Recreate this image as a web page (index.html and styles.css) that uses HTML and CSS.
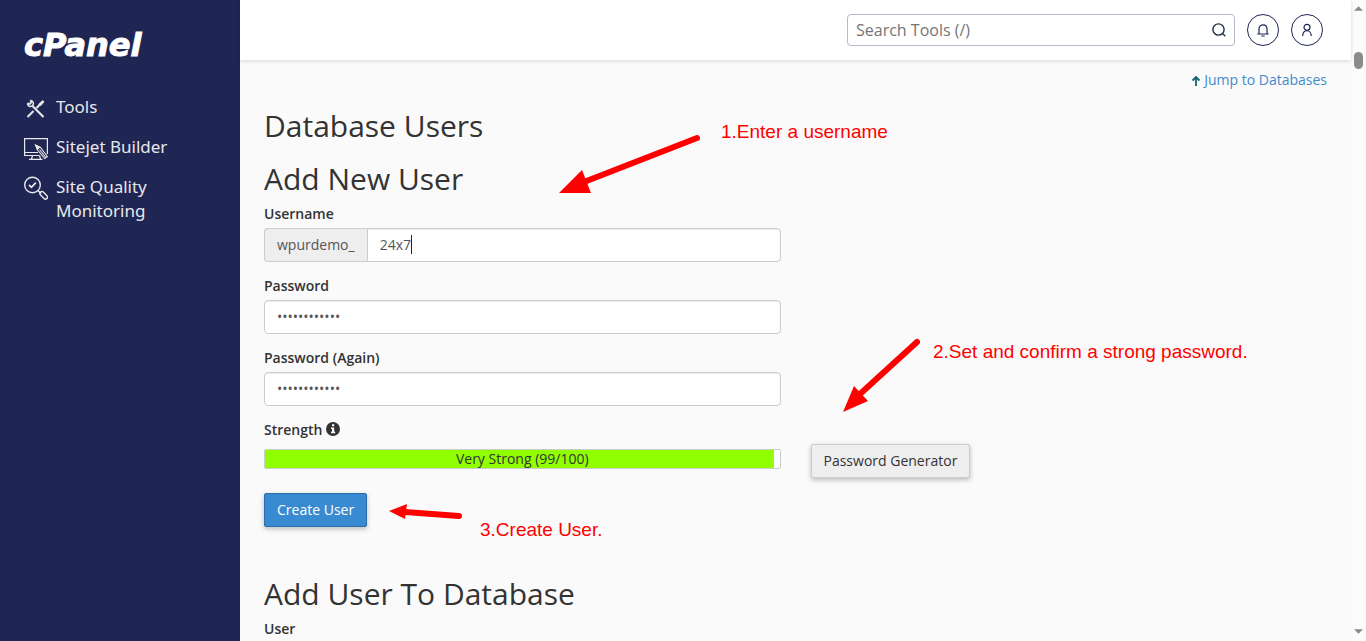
FILE: index.html
```
<!DOCTYPE html>
<html lang="en">
<head>
    <meta charset="utf-8">
    <title>cPanel - Database Users</title>
    <link rel="stylesheet" href="styles.css">
</head>
<body>
    <nav class="sidebar">
        <a class="logo" href="#">cPanel</a>
        <ul class="menu">
            <li>
                <a href="#">
                    <svg class="menu-icon" viewBox="0 0 24 24" fill="none" stroke="currentColor">
                        <path d="M8.500 10 L19.500 21" stroke-width="2.100"/>
                        <path d="M3.500 21 L9.500 15 M12.500 12 L16 8.500" stroke-width="2.100"/>
                        <path d="M15 9.500 L15 7.800 L18.700 4.500 L20 5.800 L17 9.500 Z" fill="currentColor" stroke-width="0.800"/>
                        <path d="M6.200 4.600 A2.900 2.900 0 1 1 3.600 7.200 M6.200 4.600 L7.400 6.300 L6.300 7.800 L3.600 7.200" stroke-width="1.500"/>
                    </svg>
                    <span>Tools</span>
                </a>
            </li>
            <li>
                <a href="#">
                    <svg class="menu-icon" viewBox="0 0 24 24" fill="none" stroke="currentColor">
                        <path d="M15.500 19.500 H0.600 V2.600 H23.400 V18" stroke-width="1.200"/>
                        <path d="M1 16.500 H14" stroke-width="1"/>
                        <path d="M8.500 19.500 L7.500 23 M15.500 19.500 L16.500 23 M5 23.400 H18.500" stroke-width="1.200"/>
                        <path d="M11.500 9 L16.500 11.500 L23.400 20.500 L20.800 22.500 L13.500 14 Z M15.500 13.500 L21.500 21" stroke-width="1.100"/>
                        <path d="M11.500 9 L15.800 11.200 L13.300 13.500 Z" fill="currentColor" stroke-width="1"/>
                    </svg>
                    <span>Sitejet Builder</span>
                </a>
            </li>
            <li>
                <a href="#">
                    <svg class="menu-icon" viewBox="0 0 24 24" fill="none" stroke="currentColor" stroke-width="1.400">
                        <circle cx="8.500" cy="9" r="7.800"/>
                        <path d="M5 9 L7.500 11.300 L11.800 6.700" stroke-width="1.800"/>
                        <path d="M14 14.500 L17 17.500"/>
                        <rect x="15.200" y="17.300" width="9" height="4" rx="2" transform="rotate(45 19.700 19.300)"/>
                    </svg>
                    <span>Site Quality Monitoring</span>
                </a>
            </li>
        </ul>
    </nav>

    <div class="page">
        <header class="topbar">
            <form class="search">
                <input type="text" aria-label="Search Tools" placeholder="Search Tools (/)">
                <button type="button" aria-label="Search">
                    <svg viewBox="0 0 16 16" fill="none" stroke="currentColor" stroke-width="1.400">
                        <circle cx="7.500" cy="7.500" r="5.600"/>
                        <path d="M11.500 11.500 L14.300 14.300"/>
                    </svg>
                </button>
            </form>
            <button class="round-button" type="button" aria-label="Notifications">
                <svg viewBox="0 0 16 16" fill="none" stroke="currentColor" stroke-width="1.200">
                    <path d="M2.300 12 H13.700 M4 12 V7 C4 1.500 12 1.500 12 7 V12 M6.300 14 H9.700"/>
                </svg>
            </button>
            <button class="round-button" type="button" aria-label="Account">
                <svg viewBox="0 0 16 16" fill="none" stroke="currentColor" stroke-width="1.200">
                    <circle cx="8" cy="5.300" r="3"/>
                    <path d="M3.700 14 C3.700 7 12.300 7 12.300 14"/>
                </svg>
            </button>
        </header>

        <main class="content">
            <div class="jump">
                <a href="#">
                    <svg viewBox="0 0 10 12" fill="none" stroke="currentColor" stroke-width="1.800">
                        <path d="M5 11 V2 M1.500 5.500 L5 2 L8.500 5.500"/>
                    </svg>
                    Jump to Databases
                </a>
            </div>

            <h2>Database Users</h2>
            <h2>Add New User</h2>

            <form class="user-form">
                <div class="form-group">
                    <label for="username">Username</label>
                    <div class="input-group">
                        <span class="prefix">wpurdemo_</span>
                        <div class="caret-field">
                            <input type="text" id="username" value="24x7">
                            <span class="caret"></span>
                        </div>
                    </div>
                </div>
                <div class="form-group">
                    <label for="password">Password</label>
                    <input type="password" id="password" value="abcdefghijkl">
                </div>
                <div class="form-group">
                    <label for="password2">Password (Again)</label>
                    <input type="password" id="password2" value="abcdefghijkl">
                </div>
                <div class="strength">
                    <div class="strength-label">
                        Strength
                        <svg viewBox="0 0 14 14">
                            <circle cx="7" cy="7" r="7" fill="currentColor"/>
                            <path d="M6 2.300 H8.200 V4.200 H6 Z M5 5.500 H8.200 V9.800 H9.200 V11.300 H5 V9.800 H6 V7 H5 Z" fill="#fff"/>
                        </svg>
                    </div>
                    <div class="meter">
                        <div class="meter-fill" style="width: 99%"></div>
                        <div class="meter-text">Very Strong (99/100)</div>
                    </div>
                </div>
                <div class="generator">
                    <button class="btn" type="button">Password Generator</button>
                </div>
                <div class="submit">
                    <button class="btn btn-primary" type="button">Create User</button>
                </div>
            </form>

            <h2>Add User To Database</h2>
            <div class="field-title">User</div>
        </main>

        <!-- Step callouts drawn over the form -->
        <svg class="callouts" width="1100" height="600">
            <g stroke="#f00" stroke-width="6" stroke-linecap="round">
                <path d="M457 138 L344 182"/>
                <path d="M677 342 L620 394"/>
                <path d="M219 516 L165 512"/>
            </g>
            <g fill="#f00">
                <path d="M319 193 L342 170 L351 193 Z"/>
                <path d="M603 412 L614 386 L628 401 Z"/>
                <path d="M149 511 L167 504 L165 519 Z"/>
                <text x="481" y="138">1.Enter a username</text>
                <text x="693" y="358">2.Set and confirm a strong password.</text>
                <text x="240" y="536">3.Create User.</text>
            </g>
        </svg>
    </div>

    <div class="scrollbar">
        <svg viewBox="0 0 10 5"><path d="M5 0 L10 5 H0 Z"/></svg>
        <div class="thumb"></div>
        <svg viewBox="0 0 10 5"><path d="M0 0 H10 L5 5 Z"/></svg>
    </div>
</body>
</html>
```
FILE: styles.css
```
:root {
    --navy: #1f2653;
    --text-color: #333;
    --input-border: #ccc;
    --link-color: #428bca;
    --primary: #388bd0;
}

* {
    box-sizing: border-box;
}

body {
    display: flex;
    height: 100vh;
    margin: 0;
    overflow: hidden;
    font-family: "Open Sans", "Noto Sans", sans-serif;
    font-size: 14px;
    line-height: 20px;
    color: var(--text-color);
    background-color: #fafafa;
}

a {
    color: var(--link-color);
    text-decoration: none;
}

input, button {
    font-family: inherit;
    font-size: inherit;
}

/* Sidebar */
.sidebar {
    flex: 0 0 240px;
    padding: 25px 24px;
    background-color: var(--navy);
}

.logo {
    display: block;
    font-family: "DejaVu Sans", sans-serif;
    font-size: 32px;
    font-style: italic;
    font-weight: bold;
    line-height: 40px;
    color: #fff;
    -webkit-text-stroke: 1px #fff;
}

.menu {
    display: flex;
    flex-direction: column;
    gap: 15px;
    margin: 30px 0 0;
    padding: 0;
    list-style: none;
}

.menu a {
    display: flex;
    gap: 8px;
    font-family: "Noto Sans", sans-serif;
    font-size: 17px;
    line-height: 24px;
    color: #e8e8ea;
}

.menu-icon {
    flex: 0 0 24px;
    height: 24px;
    margin-top: 1px;
}

/* Header */
.page {
    position: relative;
    flex: 1;
    min-width: 0;
}

.topbar {
    display: flex;
    justify-content: flex-end;
    align-items: center;
    gap: 12px;
    height: 60px;
    padding: 0 28px;
    background-color: #fff;
    box-shadow: 0 1px 4px rgba(0,0,0,0.15);
}

.search {
    display: flex;
    width: 388px;
    height: 32px;
    border: 1px solid #b9b8cc;
    border-radius: 4px;
    background-color: #fff;
}

.search input {
    flex: 1;
    min-width: 0;
    padding: 0 8px;
    border: none;
    background: none;
    font-size: 16px;
}

.search input::placeholder {
    color: #757575;
}

.search button {
    display: flex;
    align-items: center;
    justify-content: center;
    width: 30px;
    padding: 0;
    border: none;
    background: none;
    color: #1f2f45;
}

.search svg {
    width: 16px;
    height: 16px;
}

.round-button {
    display: flex;
    align-items: center;
    justify-content: center;
    width: 32px;
    height: 32px;
    padding: 0;
    border: 1px solid var(--navy);
    border-radius: 50%;
    background: none;
    color: var(--navy);
}

.round-button svg {
    width: 16px;
    height: 16px;
}

/* Content */
.content {
    padding: 10px 24px 0;
}

.jump {
    margin-bottom: 19px;
    text-align: right;
}

.jump svg {
    width: 10px;
    height: 12px;
    color: #12626f;
    vertical-align: -2px;
}

h2 {
    margin: 0 0 20px;
    font-size: 30px;
    font-weight: 400;
    line-height: 33px;
}

.user-form {
    display: grid;
    grid-template-columns: 1fr 1fr;
    column-gap: 30px;
    margin: -11px 0 50px;
}

.form-group {
    grid-column: 1;
    margin-bottom: 14px;
}

label, .strength-label, .field-title {
    display: block;
    margin-bottom: 4px;
    font-weight: 600;
}

.form-group input {
    display: block;
    width: 100%;
    height: 34px;
    padding: 5px 12px 7px;
    border: 1px solid var(--input-border);
    border-radius: 4px;
    background-color: #fff;
    box-shadow: inset 0 1px 1px rgba(0,0,0,0.08);
    color: #555;
}

.input-group {
    display: flex;
}

.prefix {
    padding: 6px 12px;
    border: 1px solid var(--input-border);
    border-right: none;
    border-radius: 4px 0 0 4px;
    background-color: #eee;
    color: #555;
}

.caret-field {
    position: relative;
    flex: 1;
}

.form-group .caret-field input {
    border-radius: 0 4px 4px 0;
}

.caret {
    position: absolute;
    top: 7px;
    left: 44px;
    width: 1px;
    height: 19px;
    background-color: #222;
}

.strength {
    grid-column: 1;
}

.strength-label svg {
    width: 14px;
    height: 14px;
    vertical-align: -1px;
}

.meter {
    display: grid;
    height: 20px;
    margin-top: 9px;
    border: 1px solid var(--input-border);
    border-radius: 2px;
    background-color: #fff;
    line-height: 18px;
}

.meter-fill, .meter-text {
    grid-area: 1 / 1;
}

.meter-fill {
    background-color: #90ff00;
}

.meter-text {
    text-align: center;
}

.generator {
    grid-column: 2;
    align-self: end;
    margin-bottom: -9px;
}

.submit {
    grid-column: 1;
    margin-top: 24px;
}

.btn {
    height: 34px;
    padding: 0 12px 2px;
    border: 1px solid var(--input-border);
    border-radius: 2px;
    background-color: #eee;
    box-shadow: 0 2px 5px rgba(0,0,0,0.25);
    color: var(--text-color);
    cursor: pointer;
}

.btn-primary {
    border-color: #2a6fab;
    background-color: var(--primary);
    color: #fff;
}

.content > h2:last-of-type {
    margin-bottom: 9px;
}

.callouts {
    position: absolute;
    top: 0;
    left: 0;
    pointer-events: none;
    font-family: "Liberation Sans", Arial, sans-serif;
    font-size: 19px;
}

/* Scroll track */
.scrollbar {
    display: flex;
    flex: 0 0 15px;
    flex-direction: column;
    align-items: center;
    padding: 6px 0 7px;
    background-color: #fcfcfc;
}

.scrollbar svg {
    width: 9px;
    height: 5px;
    fill: #8b8b8b;
}

.thumb {
    width: 9px;
    height: 17px;
    margin: 41px 0 auto;
    border-radius: 5px;
    background-color: #8b8b8b;
}
```
